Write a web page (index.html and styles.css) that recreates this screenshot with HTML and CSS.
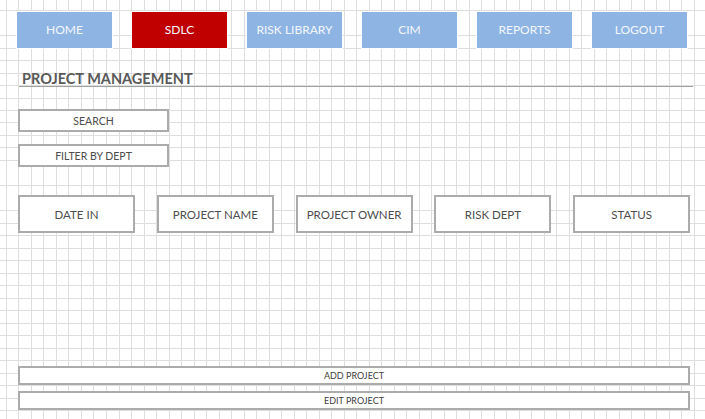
FILE: index.html
```html
<!DOCTYPE html>
<html>
<head>
<meta charset="utf-8">
<link rel="stylesheet" href="styles.css">
</head>
<body>
<div class="sheet">
  <nav class="nav">
    <div class="nav-btn">HOME</div>
    <div class="nav-btn active">SDLC</div>
    <div class="nav-btn">RISK LIBRARY</div>
    <div class="nav-btn">CIM</div>
    <div class="nav-btn">REPORTS</div>
    <div class="nav-btn">LOGOUT</div>
  </nav>
  <div class="title">PROJECT MANAGEMENT</div>
  <div class="tools">
    <div class="tool-btn">SEARCH</div>
    <div class="tool-btn">FILTER BY DEPT</div>
  </div>
  <div class="headers">
    <div class="col-head">DATE IN</div>
    <div class="col-head">PROJECT NAME</div>
    <div class="col-head">PROJECT OWNER</div>
    <div class="col-head">RISK DEPT</div>
    <div class="col-head">STATUS</div>
  </div>
  <div class="actions">
    <div class="action-btn">ADD PROJECT</div>
    <div class="action-btn">EDIT PROJECT</div>
  </div>
</div>
</body>
</html>
```

FILE: styles.css
```css
html, body {
  margin: 0;
  padding: 0;
}
body {
  width: 705px;
  height: 419px;
  overflow: hidden;
  background-color: #ffffff;
  background-image:
    repeating-linear-gradient(to right, transparent 0 6px, #dedede 6px 7px, transparent 7px 12.5px),
    repeating-linear-gradient(to bottom, transparent 0 10px, #dedede 10px 11px, transparent 11px 12.5px);
  font-family: Lato, "Open Sans", sans-serif;
}
.sheet {
  display: flex;
  flex-direction: column;
  padding: 12px 0 0 17px;
}
.nav {
  display: flex;
  gap: 20px;
}
.nav-btn {
  width: 95px;
  height: 36px;
  padding-bottom: 2px;
  box-sizing: border-box;
  background: #8eb4e3;
  box-shadow: 0 0 0 1px #ffffff;
  color: #f4f7fb;
  font-size: 12px;
  display: flex;
  align-items: center;
  justify-content: center;
}
.nav-btn.active {
  background: #c00000;
}
.title {
  margin: 22px 0 0 2px;
  width: 674px;
  height: 17px;
  padding-left: 3px;
  box-sizing: border-box;
  border-bottom: 1px solid #a0a0a0;
  color: #595959;
  font-weight: bold;
  font-size: 14.5px;
  line-height: 17px;
}
.tools {
  display: flex;
  flex-direction: column;
  gap: 12px;
  margin: 22px 0 0 1px;
}
.tool-btn {
  width: 151px;
  height: 23px;
  box-sizing: border-box;
  border: 2px solid #ababab;
  background: #ffffff;
  color: #4d4d4d;
  font-size: 10.5px;
  display: flex;
  align-items: center;
  justify-content: center;
}
.headers {
  display: flex;
  gap: 21.8px;
  margin: 28px 0 0 1px;
}
.col-head {
  width: 117px;
  height: 38px;
  box-sizing: border-box;
  border: 2px solid #ababab;
  background: #ffffff;
  color: #4d4d4d;
  font-size: 11.5px;
  display: flex;
  align-items: center;
  justify-content: center;
}
.actions {
  display: flex;
  flex-direction: column;
  gap: 6px;
  margin: 133px 0 0 1px;
}
.action-btn {
  width: 672px;
  height: 19px;
  box-sizing: border-box;
  border: 2px solid #ababab;
  background: #ffffff;
  color: #404040;
  font-size: 9px;
  display: flex;
  align-items: center;
  justify-content: center;
}
```
